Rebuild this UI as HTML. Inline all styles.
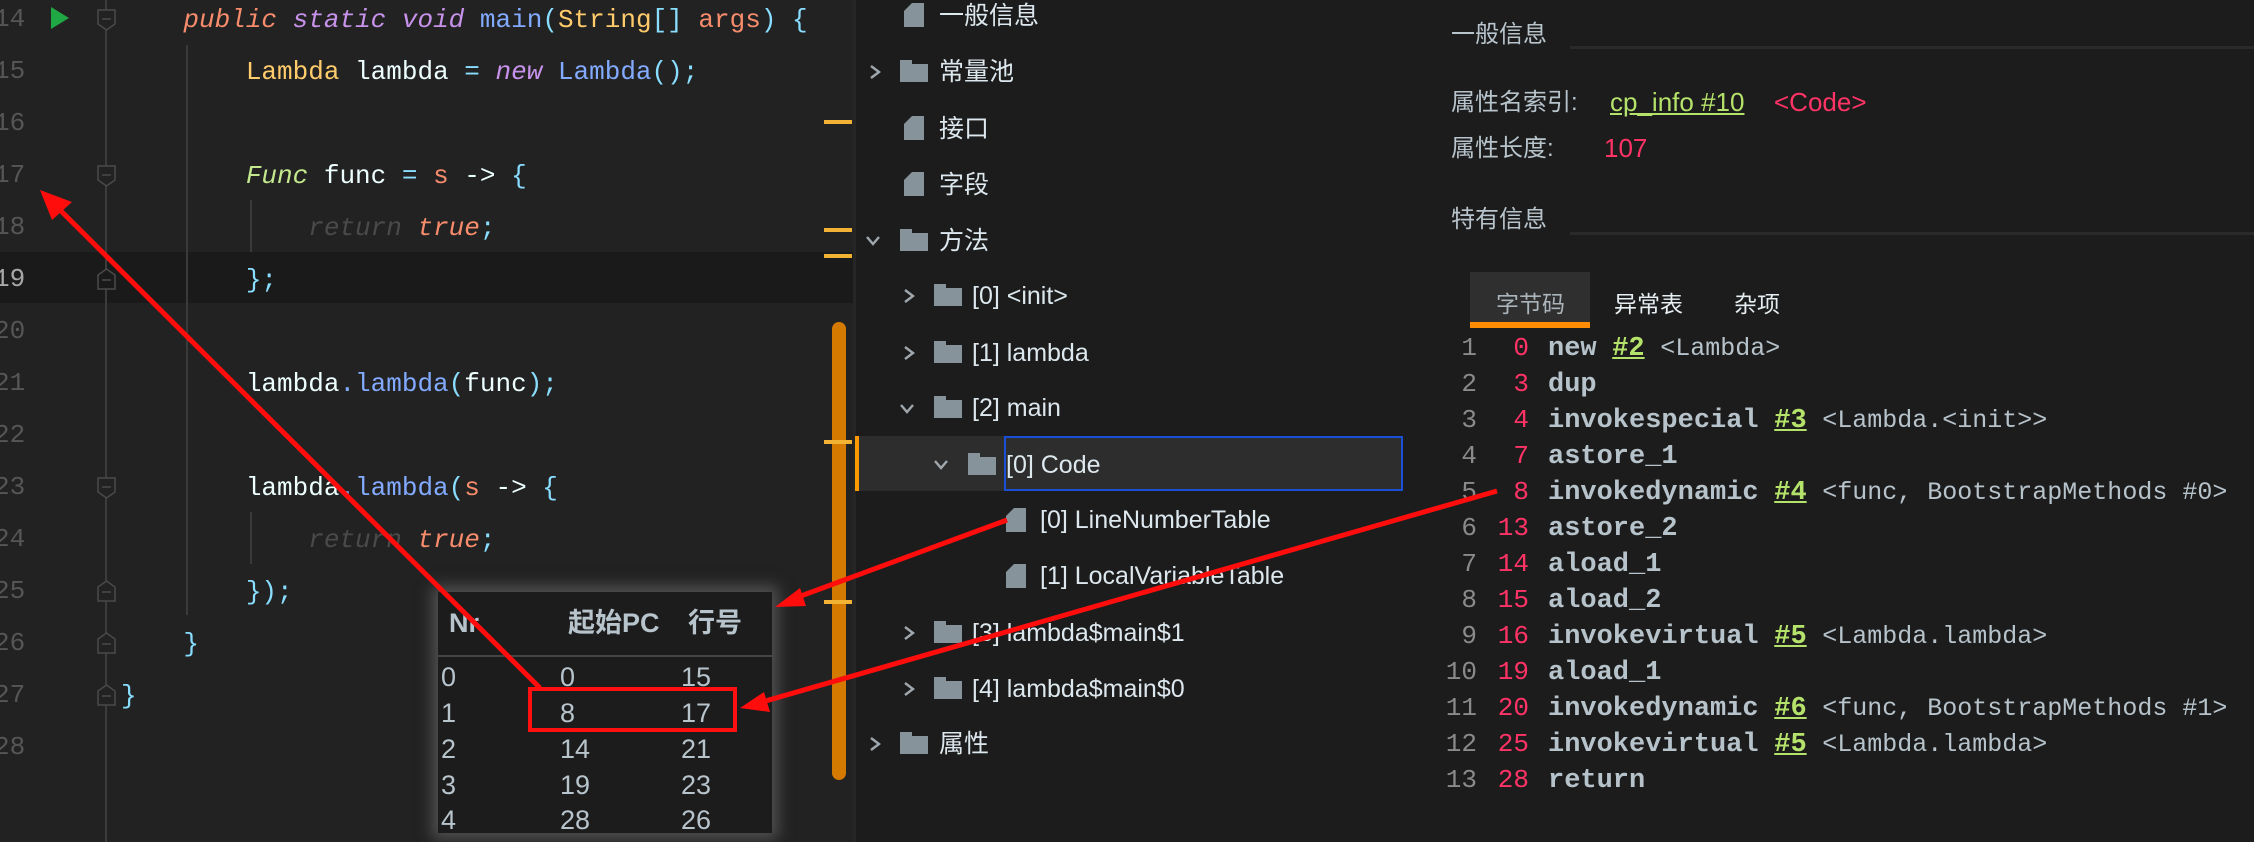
<!DOCTYPE html>
<html><head><meta charset="utf-8"><style>
*{margin:0;padding:0;box-sizing:border-box}
body{width:2254px;height:842px;overflow:hidden;background:#1c1c1c;position:relative;font-family:"Liberation Sans","Noto Sans CJK SC",sans-serif}
.a{position:absolute;white-space:pre}
#ed{position:absolute;left:0;top:0;width:853px;height:842px;background:#222222;overflow:hidden}
.ln{position:absolute;left:-6px;width:40px;font:26px/52px "Liberation Mono",monospace;color:#565656;text-align:left}
.cl{position:absolute;left:121px;font:26px/52px "Liberation Mono",monospace;color:#eeffff;white-space:pre}
.k{color:#c792ea;font-style:italic}.o{color:#f78c6c}.oi{color:#f78c6c;font-style:italic}.y{color:#ffcb6b}.b{color:#82aaff}.c{color:#89ddff}.g{color:#c3e88d;font-style:italic}.r{color:#4a4a4a;font-style:italic}
.fold{position:absolute;left:97px;width:19px;height:22px}
.tr{position:absolute;font-size:25px;line-height:56px;height:56px;color:#dde8ee;white-space:pre}
.ar{position:absolute;width:18px;height:18px}
.fd{position:absolute;width:28px;height:18px;background:#87939b}
.fd:before{content:"";position:absolute;left:0;top:-4px;width:12px;height:5px;background:#87939b}
.fl{position:absolute;width:20px;height:24px;background:#87939b;clip-path:polygon(8px 0,100% 0,100% 100%,0 100%,0 8px)}
.fl:after{content:"";position:absolute;left:0;top:0;width:7px;height:7px;background:#1c1c1c;clip-path:polygon(0 0,100% 0,0 100%)}
.bc{position:absolute;font:26px/36px "Liberation Mono",monospace;white-space:pre}
.n{color:#8a8a8a;display:inline-block;width:36px;text-align:right}
.of{color:#ff3366;display:inline-block;width:52px;text-align:right;margin-right:19px}
.in{color:#b7c3cb;font-weight:bold;font-size:27px}
.rf{color:#b5e26a;font-weight:bold;text-decoration:underline;font-size:27px}
.cm{color:#b7c3cb;font-size:25px}
.tb{position:absolute;font-size:27px;color:#b8c4cc;line-height:36px}
.rt{position:absolute;white-space:pre;line-height:32px;height:32px;font-size:24px;color:#b8c4cc}
</style></head><body>
<div id="ed">
<div style="position:absolute;left:0;top:252px;width:853px;height:51px;background:#1a1a1a"></div>
<div style="position:absolute;left:105px;top:0;width:2px;height:842px;background:#3c3c3c"></div>
<div style="position:absolute;left:186px;top:45px;width:2px;height:570px;background:#3a3a3a"></div>
<div style="position:absolute;left:250px;top:200px;width:2px;height:52px;background:#3a3a3a"></div>
<div style="position:absolute;left:250px;top:512px;width:2px;height:52px;background:#3a3a3a"></div>
<div class="ln" style="top:-7px">14</div><div class="ln" style="top:45px">15</div><div class="ln" style="top:97px">16</div><div class="ln" style="top:149px">17</div><div class="ln" style="top:201px">18</div><div class="ln" style="top:253px;color:#a8a8a8">19</div><div class="ln" style="top:305px">20</div><div class="ln" style="top:357px">21</div><div class="ln" style="top:409px">22</div><div class="ln" style="top:461px">23</div><div class="ln" style="top:513px">24</div><div class="ln" style="top:565px">25</div><div class="ln" style="top:617px">26</div><div class="ln" style="top:669px">27</div><div class="ln" style="top:721px">28</div>
<svg class="a" style="left:50px;top:6px" width="20" height="24"><polygon points="1,1 19,12 1,23" fill="#1fa843"/></svg>
<svg class="fold" style="top:9px" viewBox="0 0 19 22"><path d="M1 1H18V15L9.5 21L1 15Z" fill="#222" stroke="#4a4a4a" stroke-width="1.5"/><path d="M5 10H14" stroke="#4a4a4a" stroke-width="1.5"/></svg>
<svg class="fold" style="top:165px" viewBox="0 0 19 22"><path d="M1 1H18V15L9.5 21L1 15Z" fill="#222" stroke="#4a4a4a" stroke-width="1.5"/><path d="M5 10H14" stroke="#4a4a4a" stroke-width="1.5"/></svg>
<svg class="fold" style="top:268px" viewBox="0 0 19 22"><path d="M1 21H18V7L9.5 1L1 7Z" fill="#1a1a1a" stroke="#4a4a4a" stroke-width="1.5"/><path d="M5 12H14" stroke="#4a4a4a" stroke-width="1.5"/></svg>
<svg class="fold" style="top:477px" viewBox="0 0 19 22"><path d="M1 1H18V15L9.5 21L1 15Z" fill="#222" stroke="#4a4a4a" stroke-width="1.5"/><path d="M5 10H14" stroke="#4a4a4a" stroke-width="1.5"/></svg>
<svg class="fold" style="top:580px" viewBox="0 0 19 22"><path d="M1 21H18V7L9.5 1L1 7Z" fill="#222" stroke="#4a4a4a" stroke-width="1.5"/><path d="M5 12H14" stroke="#4a4a4a" stroke-width="1.5"/></svg>
<svg class="fold" style="top:632px" viewBox="0 0 19 22"><path d="M1 21H18V7L9.5 1L1 7Z" fill="#222" stroke="#4a4a4a" stroke-width="1.5"/><path d="M5 12H14" stroke="#4a4a4a" stroke-width="1.5"/></svg>
<svg class="fold" style="top:684px" viewBox="0 0 19 22"><path d="M1 21H18V7L9.5 1L1 7Z" fill="#222" stroke="#4a4a4a" stroke-width="1.5"/><path d="M5 12H14" stroke="#4a4a4a" stroke-width="1.5"/></svg>
<div class="cl" style="top:-6px">    <span class="oi">public</span> <span class="k">static void</span> <span class="b">main</span><span class="c">(</span><span class="y">String</span><span class="c">[]</span> <span class="o">args</span><span class="c">) {</span></div>
<div class="cl" style="top:46px">        <span class="y">Lambda</span> lambda <span class="c">=</span> <span class="k">new</span> <span class="b">Lambda</span><span class="c">();</span></div>
<div class="cl" style="top:150px">        <span class="g">Func</span> func <span class="c">=</span> <span class="o">s</span> -&gt; <span class="c">{</span></div>
<div class="cl" style="top:202px">            <span class="r">return</span> <span class="oi">true</span><span class="c">;</span></div>
<div class="cl" style="top:254px">        <span class="c">};</span></div>
<div class="cl" style="top:358px">        lambda<span class="b">.lambda</span><span class="c">(</span>func<span class="c">);</span></div>
<div class="cl" style="top:462px">        lambda<span class="b">.lambda</span><span class="c">(</span><span class="o">s</span> -&gt; <span class="c">{</span></div>
<div class="cl" style="top:514px">            <span class="r">return</span> <span class="oi">true</span><span class="c">;</span></div>
<div class="cl" style="top:566px">        <span class="c">});</span></div>
<div class="cl" style="top:618px">    <span class="c">}</span></div>
<div class="cl" style="top:670px"><span class="c">}</span></div>
<div style="position:absolute;left:832px;top:322px;width:14px;height:458px;border-radius:7px;background:#d47a00"></div>
<div style="position:absolute;left:824px;top:120px;width:28px;height:4px;background:#f2b233"></div>
<div style="position:absolute;left:824px;top:228px;width:28px;height:4px;background:#f2b233"></div>
<div style="position:absolute;left:824px;top:254px;width:28px;height:4px;background:#f2b233"></div>
<div style="position:absolute;left:824px;top:440px;width:28px;height:4px;background:#f2b233"></div>
<div style="position:absolute;left:824px;top:600px;width:28px;height:4px;background:#f2b233"></div>
</div>
<div style="position:absolute;left:853px;top:0;width:3px;height:842px;background:#262626"></div>
<!-- tree -->
<div style="position:absolute;left:855px;top:436px;width:548px;height:55px;background:#2d2d2d"></div>
<div style="position:absolute;left:855px;top:436px;width:4px;height:55px;background:#ff9a00"></div>
<div style="position:absolute;left:1004px;top:436px;width:399px;height:55px;border:2px solid #1a4fd6"></div>
<svg width="0" height="0" style="position:absolute"><defs>
<path id="cr" d="M5 3L13 9L5 15" fill="none" stroke="#a0a8ae" stroke-width="2.4"/>
<path id="cd" d="M3 5L9 12L15 5" fill="none" stroke="#a0a8ae" stroke-width="2.4"/>
</defs></svg>
<div class="fl" style="left:904px;top:3px"></div><div class="tr" style="left:939px;top:-12px">一般信息</div>
<svg class="ar" style="left:866px;top:63px"><use href="#cr"/></svg><div class="fd" style="left:900px;top:64px"></div><div class="tr" style="left:939px;top:44px">常量池</div>
<div class="fl" style="left:904px;top:116px"></div><div class="tr" style="left:939px;top:101px">接口</div>
<div class="fl" style="left:904px;top:172px"></div><div class="tr" style="left:939px;top:157px">字段</div>
<svg class="ar" style="left:864px;top:232px"><use href="#cd"/></svg><div class="fd" style="left:900px;top:233px"></div><div class="tr" style="left:939px;top:213px">方法</div>
<svg class="ar" style="left:900px;top:287px"><use href="#cr"/></svg><div class="fd" style="left:934px;top:288px"></div><div class="tr" style="left:972px;top:268px">[0] &lt;init&gt;</div>
<svg class="ar" style="left:900px;top:344px"><use href="#cr"/></svg><div class="fd" style="left:934px;top:345px"></div><div class="tr" style="left:972px;top:325px">[1] lambda</div>
<svg class="ar" style="left:898px;top:400px"><use href="#cd"/></svg><div class="fd" style="left:934px;top:400px"></div><div class="tr" style="left:972px;top:380px">[2] main</div>
<svg class="ar" style="left:932px;top:456px"><use href="#cd"/></svg><div class="fd" style="left:968px;top:457px"></div><div class="tr" style="left:1006px;top:437px">[0] Code</div>
<div class="fl" style="left:1006px;top:508px"></div><div class="tr" style="left:1040px;top:492px">[0] LineNumberTable</div>
<div class="fl" style="left:1006px;top:564px"></div><div class="tr" style="left:1040px;top:548px">[1] LocalVariableTable</div>
<svg class="ar" style="left:900px;top:624px"><use href="#cr"/></svg><div class="fd" style="left:934px;top:625px"></div><div class="tr" style="left:972px;top:605px">[3] lambda$main$1</div>
<svg class="ar" style="left:900px;top:680px"><use href="#cr"/></svg><div class="fd" style="left:934px;top:681px"></div><div class="tr" style="left:972px;top:661px">[4] lambda$main$0</div>
<svg class="ar" style="left:866px;top:735px"><use href="#cr"/></svg><div class="fd" style="left:900px;top:736px"></div><div class="tr" style="left:939px;top:716px">属性</div>
<!-- right -->
<div class="rt" style="left:1451px;top:19px">一般信息</div>
<div style="position:absolute;left:1570px;top:46px;width:684px;height:3px;background:#2a2a2a"></div>
<div class="rt" style="left:1451px;top:87px">属性名索引:</div>
<div class="rt" style="left:1610px;top:86px;font-size:26px;color:#b5e26a;text-decoration:underline">cp_info #10</div>
<div class="rt" style="left:1774px;top:86px;font-size:26px;color:#ff3366">&lt;Code&gt;</div>
<div class="rt" style="left:1451px;top:133px">属性长度:</div>
<div class="rt" style="left:1604px;top:132px;font-size:26px;color:#ff3366">107</div>
<div class="rt" style="left:1451px;top:204px">特有信息</div>
<div style="position:absolute;left:1570px;top:232px;width:684px;height:3px;background:#2a2a2a"></div>
<div style="position:absolute;left:1470px;top:272px;width:120px;height:56px;background:#2f2f2f;border-bottom:6px solid #ff8c00"></div>
<div class="a" style="left:1496px;top:285px;font-size:23px;color:#aab4ba">字节码</div>
<div class="a" style="left:1614px;top:285px;font-size:23px;color:#e6eef2">异常表</div>
<div class="a" style="left:1734px;top:285px;font-size:23px;color:#e6eef2">杂项</div>
<div class="bc" style="left:1441px;top:330px"><span class="n">1</span><span class="of">0</span><span class="in">new</span> <span class="rf">#2</span> <span class="cm">&lt;Lambda&gt;</span></div>
<div class="bc" style="left:1441px;top:366px"><span class="n">2</span><span class="of">3</span><span class="in">dup</span></div>
<div class="bc" style="left:1441px;top:402px"><span class="n">3</span><span class="of">4</span><span class="in">invokespecial</span> <span class="rf">#3</span> <span class="cm">&lt;Lambda.&lt;init&gt;&gt;</span></div>
<div class="bc" style="left:1441px;top:438px"><span class="n">4</span><span class="of">7</span><span class="in">astore_1</span></div>
<div class="bc" style="left:1441px;top:474px"><span class="n">5</span><span class="of">8</span><span class="in">invokedynamic</span> <span class="rf">#4</span> <span class="cm">&lt;func, BootstrapMethods #0&gt;</span></div>
<div class="bc" style="left:1441px;top:510px"><span class="n">6</span><span class="of">13</span><span class="in">astore_2</span></div>
<div class="bc" style="left:1441px;top:546px"><span class="n">7</span><span class="of">14</span><span class="in">aload_1</span></div>
<div class="bc" style="left:1441px;top:582px"><span class="n">8</span><span class="of">15</span><span class="in">aload_2</span></div>
<div class="bc" style="left:1441px;top:618px"><span class="n">9</span><span class="of">16</span><span class="in">invokevirtual</span> <span class="rf">#5</span> <span class="cm">&lt;Lambda.lambda&gt;</span></div>
<div class="bc" style="left:1441px;top:654px"><span class="n">10</span><span class="of">19</span><span class="in">aload_1</span></div>
<div class="bc" style="left:1441px;top:690px"><span class="n">11</span><span class="of">20</span><span class="in">invokedynamic</span> <span class="rf">#6</span> <span class="cm">&lt;func, BootstrapMethods #1&gt;</span></div>
<div class="bc" style="left:1441px;top:726px"><span class="n">12</span><span class="of">25</span><span class="in">invokevirtual</span> <span class="rf">#5</span> <span class="cm">&lt;Lambda.lambda&gt;</span></div>
<div class="bc" style="left:1441px;top:762px"><span class="n">13</span><span class="of">28</span><span class="in">return</span></div>
<!-- table popup -->
<div style="position:absolute;left:438px;top:592px;width:334px;height:241px;background:#1c1c1c;box-shadow:0 0 14px 6px rgba(120,120,120,.55)"></div>
<div style="position:absolute;left:438px;top:655px;width:334px;height:2px;background:#444"></div>
<div class="tb" style="left:449px;top:605px;font-weight:bold">Nr</div>
<div class="tb" style="left:568px;top:605px;font-weight:bold">起始PC</div>
<div class="tb" style="left:688px;top:605px;font-weight:bold">行号</div>
<div class="tb" style="left:441px;top:659px">0</div><div class="tb" style="left:560px;top:659px">0</div><div class="tb" style="left:681px;top:659px">15</div>
<div class="tb" style="left:441px;top:695px">1</div><div class="tb" style="left:560px;top:695px">8</div><div class="tb" style="left:681px;top:695px">17</div>
<div class="tb" style="left:441px;top:731px">2</div><div class="tb" style="left:560px;top:731px">14</div><div class="tb" style="left:681px;top:731px">21</div>
<div class="tb" style="left:441px;top:767px">3</div><div class="tb" style="left:560px;top:767px">19</div><div class="tb" style="left:681px;top:767px">23</div>
<div class="tb" style="left:441px;top:802px">4</div><div class="tb" style="left:560px;top:802px">28</div><div class="tb" style="left:681px;top:802px">26</div>
<div style="position:absolute;left:528px;top:687px;width:209px;height:45px;border:4px solid #ff1010"></div>
<svg class="a" style="left:0;top:0" width="2254" height="842">
<g stroke="#ff0d0d" stroke-width="5" fill="#ff0d0d">
<line x1="540" y1="688" x2="50" y2="200"/>
<polygon points="40,190 72,202 52,220" stroke="none"/>
<line x1="1007" y1="520" x2="790" y2="600"/>
<polygon points="775,607 800,588 806,606" stroke="none"/>
<line x1="1497" y1="491" x2="755" y2="704"/>
<polygon points="740,708 764,692 770,712" stroke="none"/>
</g></svg>
</body></html>
